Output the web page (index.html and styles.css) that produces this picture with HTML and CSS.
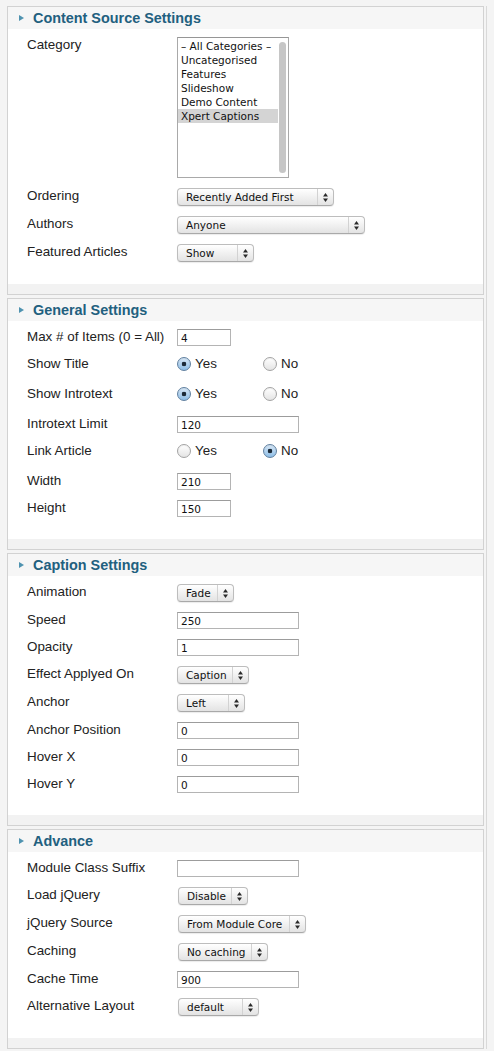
FILE: index.html
```html
<!DOCTYPE html>
<html lang="en">
<head>
<meta charset="utf-8">
<title>Module Settings</title>
<link rel="stylesheet" href="styles.css">
</head>
<body>
<div class="wrap">

  <section class="panel">
    <h3 class="panel-head"><span class="tri"></span>Content Source Settings</h3>
    <div class="panel-body">
      <div class="row row-list">
        <span class="label">Category</span>
        <div class="listbox">
          <div class="items">
            <div class="item">– All Categories –</div>
            <div class="item">Uncategorised</div>
            <div class="item">Features</div>
            <div class="item">Slideshow</div>
            <div class="item">Demo Content</div>
            <div class="item item-sel">Xpert Captions</div>
          </div>
          <div class="scroll"><div class="thumb"></div></div>
        </div>
      </div>
      <div class="row sel">
        <span class="label">Ordering</span>
        <div class="select w-ordering"><span class="sel-text">Recently Added First</span><span class="arrows"><svg width="5" height="9" viewBox="0 0 5 9"><polygon points="0,3.6 2.5,0 5,3.6" /><polygon points="0,5.4 2.5,9 5,5.4" /></svg></span></div>
      </div>
      <div class="row sel">
        <span class="label">Authors</span>
        <div class="select w-authors"><span class="sel-text">Anyone</span><span class="arrows"><svg width="5" height="9" viewBox="0 0 5 9"><polygon points="0,3.6 2.5,0 5,3.6" /><polygon points="0,5.4 2.5,9 5,5.4" /></svg></span></div>
      </div>
      <div class="row sel">
        <span class="label">Featured Articles</span>
        <div class="select w-show"><span class="sel-text">Show</span><span class="arrows"><svg width="5" height="9" viewBox="0 0 5 9"><polygon points="0,3.6 2.5,0 5,3.6" /><polygon points="0,5.4 2.5,9 5,5.4" /></svg></span></div>
      </div>
    </div>
    <div class="panel-foot"></div>
  </section>

  <section class="panel">
    <h3 class="panel-head"><span class="tri"></span>General Settings</h3>
    <div class="panel-body">
      <div class="row">
        <span class="label">Max # of Items (0 = All)</span>
        <input class="text short" type="text" value="4">
      </div>
      <div class="row rad">
        <span class="label">Show Title</span>
        <div class="radios">
          <span class="opt"><span class="radio on"></span>Yes</span>
          <span class="opt"><span class="radio"></span>No</span>
        </div>
      </div>
      <div class="row rad">
        <span class="label">Show Introtext</span>
        <div class="radios">
          <span class="opt"><span class="radio on"></span>Yes</span>
          <span class="opt"><span class="radio"></span>No</span>
        </div>
      </div>
      <div class="row">
        <span class="label">Introtext Limit</span>
        <input class="text long" type="text" value="120">
      </div>
      <div class="row rad">
        <span class="label">Link Article</span>
        <div class="radios">
          <span class="opt"><span class="radio"></span>Yes</span>
          <span class="opt"><span class="radio on"></span>No</span>
        </div>
      </div>
      <div class="row">
        <span class="label">Width</span>
        <input class="text short" type="text" value="210">
      </div>
      <div class="row">
        <span class="label">Height</span>
        <input class="text short" type="text" value="150">
      </div>
    </div>
    <div class="panel-foot"></div>
  </section>

  <section class="panel">
    <h3 class="panel-head"><span class="tri"></span>Caption Settings</h3>
    <div class="panel-body">
      <div class="row sel">
        <span class="label">Animation</span>
        <div class="select w-fade"><span class="sel-text">Fade</span><span class="arrows"><svg width="5" height="9" viewBox="0 0 5 9"><polygon points="0,3.6 2.5,0 5,3.6" /><polygon points="0,5.4 2.5,9 5,5.4" /></svg></span></div>
      </div>
      <div class="row">
        <span class="label">Speed</span>
        <input class="text long" type="text" value="250">
      </div>
      <div class="row">
        <span class="label">Opacity</span>
        <input class="text long" type="text" value="1">
      </div>
      <div class="row sel">
        <span class="label">Effect Applyed On</span>
        <div class="select w-caption"><span class="sel-text">Caption</span><span class="arrows"><svg width="5" height="9" viewBox="0 0 5 9"><polygon points="0,3.6 2.5,0 5,3.6" /><polygon points="0,5.4 2.5,9 5,5.4" /></svg></span></div>
      </div>
      <div class="row sel">
        <span class="label">Anchor</span>
        <div class="select w-left"><span class="sel-text">Left</span><span class="arrows"><svg width="5" height="9" viewBox="0 0 5 9"><polygon points="0,3.6 2.5,0 5,3.6" /><polygon points="0,5.4 2.5,9 5,5.4" /></svg></span></div>
      </div>
      <div class="row">
        <span class="label">Anchor Position</span>
        <input class="text long" type="text" value="0">
      </div>
      <div class="row">
        <span class="label">Hover X</span>
        <input class="text long" type="text" value="0">
      </div>
      <div class="row">
        <span class="label">Hover Y</span>
        <input class="text long" type="text" value="0">
      </div>
    </div>
    <div class="panel-foot"></div>
  </section>

  <section class="panel">
    <h3 class="panel-head"><span class="tri"></span>Advance</h3>
    <div class="panel-body">
      <div class="row">
        <span class="label">Module Class Suffix</span>
        <input class="text long" type="text" value="">
      </div>
      <div class="row sel">
        <span class="label">Load jQuery</span>
        <div class="select w-disable"><span class="sel-text">Disable</span><span class="arrows"><svg width="5" height="9" viewBox="0 0 5 9"><polygon points="0,3.6 2.5,0 5,3.6" /><polygon points="0,5.4 2.5,9 5,5.4" /></svg></span></div>
      </div>
      <div class="row sel">
        <span class="label">jQuery Source</span>
        <div class="select w-core"><span class="sel-text">From Module Core</span><span class="arrows"><svg width="5" height="9" viewBox="0 0 5 9"><polygon points="0,3.6 2.5,0 5,3.6" /><polygon points="0,5.4 2.5,9 5,5.4" /></svg></span></div>
      </div>
      <div class="row sel">
        <span class="label">Caching</span>
        <div class="select w-caching"><span class="sel-text">No caching</span><span class="arrows"><svg width="5" height="9" viewBox="0 0 5 9"><polygon points="0,3.6 2.5,0 5,3.6" /><polygon points="0,5.4 2.5,9 5,5.4" /></svg></span></div>
      </div>
      <div class="row">
        <span class="label">Cache Time</span>
        <input class="text long" type="text" value="900">
      </div>
      <div class="row sel">
        <span class="label">Alternative Layout</span>
        <div class="select w-default"><span class="sel-text">default</span><span class="arrows"><svg width="5" height="9" viewBox="0 0 5 9"><polygon points="0,3.6 2.5,0 5,3.6" /><polygon points="0,5.4 2.5,9 5,5.4" /></svg></span></div>
      </div>
    </div>
    <div class="panel-foot"></div>
  </section>

</div>
</body>
</html>
```

FILE: styles.css
```css
* { box-sizing: border-box; }

html, body {
  margin: 0;
  padding: 0;
}

body {
  background: #f4f4f4;
  padding-top: 6px;
  font-family: "Liberation Sans", Arial, sans-serif;
  font-size: 13.4px;
  color: #222;
}

.wrap {
  margin-left: 7px;
  width: 480px;
  border-right: 1px solid #d9d9d9;
}

.panel {
  width: 477px;
  border: 1px solid #d2d2d2;
  background: #fff;
  margin-bottom: 3px;
}

.panel-head {
  margin: 0;
  height: 22px;
  display: flex;
  align-items: center;
  padding-left: 11px;
  background: #f6f6f6;
  font-family: "Liberation Sans", Arial, sans-serif;
  font-weight: bold;
  font-size: 14.4px;
  color: #22607f;
}

.tri {
  width: 0;
  height: 0;
  border-top: 3.5px solid transparent;
  border-bottom: 3.5px solid transparent;
  border-left: 5px solid #4f93b0;
  margin-right: 9px;
}

.panel-body {
  padding: 7px 0 13px 19px;
}

.panel-foot {
  height: 10px;
  background: #f2f2f2;
}

.row {
  display: flex;
  align-items: flex-start;
  height: 27px;
}

.row.sel { height: 28px; }
.row.rad { height: 30px; }
.row.row-list { height: 151px; }

.label {
  width: 150px;
  flex: none;
  line-height: 17px;
  white-space: nowrap;
}

/* text inputs */
.text {
  margin: 1px 0 0 0;
  height: 17px;
  padding: 0 3px;
  border: 1px solid #b4b4b4;
  border-top-color: #9c9c9c;
  background: #fff;
  font-family: "DejaVu Sans", Verdana, sans-serif;
  font-size: 10.5px;
  color: #111;
  outline: none;
}

.text.short { width: 54px; }
.text.long { width: 122px; }

/* selects */
.select {
  margin-top: 1px;
  height: 18px;
  display: flex;
  align-items: stretch;
  border: 1px solid #bdbdbd;
  border-bottom-color: #a9a9a9;
  border-radius: 4px;
  background: linear-gradient(#ffffff, #f1f1f1 50%, #e3e3e3);
  box-shadow: 0 1px 1px rgba(0,0,0,0.08);
  font-family: "DejaVu Sans", Verdana, sans-serif;
  font-size: 10.5px;
  color: #111;
}

.sel-text {
  flex: 1;
  padding-left: 8px;
  line-height: 16px;
  white-space: nowrap;
  overflow: hidden;
}

.arrows {
  width: 16px;
  flex: none;
  border-left: 1px solid #d2d2d2;
  display: flex;
  align-items: center;
  justify-content: center;
}

.arrows svg { fill: #2a2a2a; display: block; }

.w-ordering { width: 157px; }
.w-authors { width: 188px; }
.w-show { width: 77px; }
.w-fade { width: 57px; }
.w-caption { width: 72px; }
.w-left { width: 68px; }
.w-disable { width: 70px; margin-left: 1px; }
.w-core { width: 128px; margin-left: 1px; }
.w-caching { width: 90px; margin-left: 1px; }
.w-default { width: 81px; margin-left: 1px; }

/* listbox */
.listbox {
  margin-top: 1px;
  width: 112px;
  height: 141px;
  border: 1px solid #a9a9a9;
  border-top-color: #969696;
  background: #fff;
  display: flex;
  padding-top: 1px;
  font-family: "DejaVu Sans", Verdana, sans-serif;
  font-size: 10.5px;
  color: #111;
}

.items {
  width: 100px;
  flex: none;
}

.item {
  height: 14px;
  line-height: 14px;
  padding-left: 3px;
  white-space: nowrap;
  overflow: hidden;
}

.item-sel { background: #d4d4d4; }

.scroll {
  flex: 1;
  padding: 3px 1px 3px 1px;
}

.thumb {
  width: 7px;
  height: 131px;
  border-radius: 4px;
  background: #c6c6c6;
}

/* radios */
.radios {
  display: flex;
}

.opt {
  width: 86px;
  display: flex;
  align-items: center;
  height: 17px;
  line-height: 17px;
}

.radio {
  width: 14px;
  height: 14px;
  border-radius: 50%;
  border: 1px solid #a3a3a3;
  background: linear-gradient(#ffffff, #e4e4e4);
  box-shadow: inset 0 1px 1px rgba(0,0,0,0.06);
  margin-right: 4px;
  flex: none;
}

.radio.on {
  border-color: #60809f;
  background: radial-gradient(circle at 50% 50%, #1c2a38 0, #1c2a38 2px, rgba(0,0,0,0) 2.6px),
              linear-gradient(#d8e8f7, #8dbde6);
}
```
